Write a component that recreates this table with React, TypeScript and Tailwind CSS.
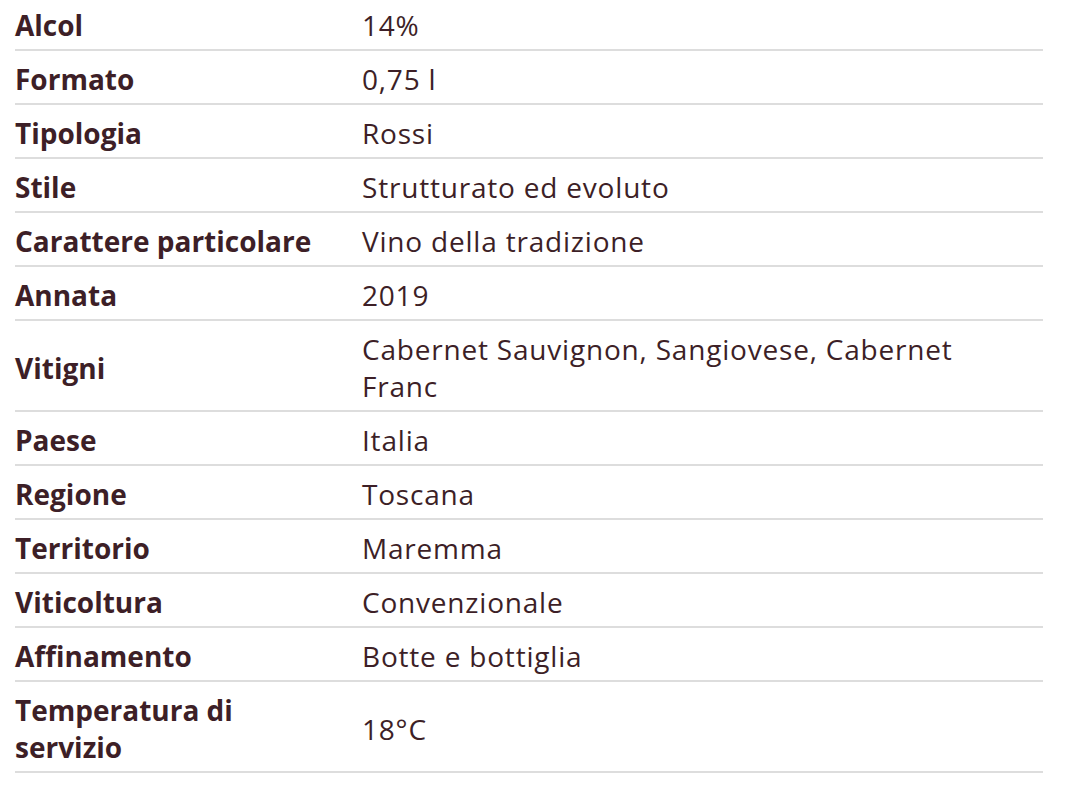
const rows: [string, string][] = [
  ['Alcol', '14%'],
  ['Formato', '0,75 l'],
  ['Tipologia', 'Rossi'],
  ['Stile', 'Strutturato ed evoluto'],
  ['Carattere particolare', 'Vino della tradizione'],
  ['Annata', '2019'],
  ['Vitigni', 'Cabernet Sauvignon, Sangiovese, Cabernet Franc'],
  ['Paese', 'Italia'],
  ['Regione', 'Toscana'],
  ['Territorio', 'Maremma'],
  ['Viticoltura', 'Convenzionale'],
  ['Affinamento', 'Botte e bottiglia'],
  ['Temperatura di servizio', '18°C'],
];

export default function App() {
  return (
    <div className="w-[1080px] h-[800px] overflow-hidden bg-white" style={{ fontFamily: "'Open Sans', 'DejaVu Sans', sans-serif" }}>
      <div className="ml-[15px] w-[1028px] -mt-[3px] text-[#3d1f27] text-[28px] leading-[37px]">
        {rows.map(([label, value]) => (
          <div key={label} className="grid grid-cols-[347px_1fr] items-center pt-[10px] pb-[5px] border-b-2 border-[#dddddd]">
            <div className="font-bold pr-[30px]">{label}</div>
            <div className="pr-[20px] tracking-[0.8px]">{value}</div>
          </div>
        ))}
      </div>
    </div>
  );
}
